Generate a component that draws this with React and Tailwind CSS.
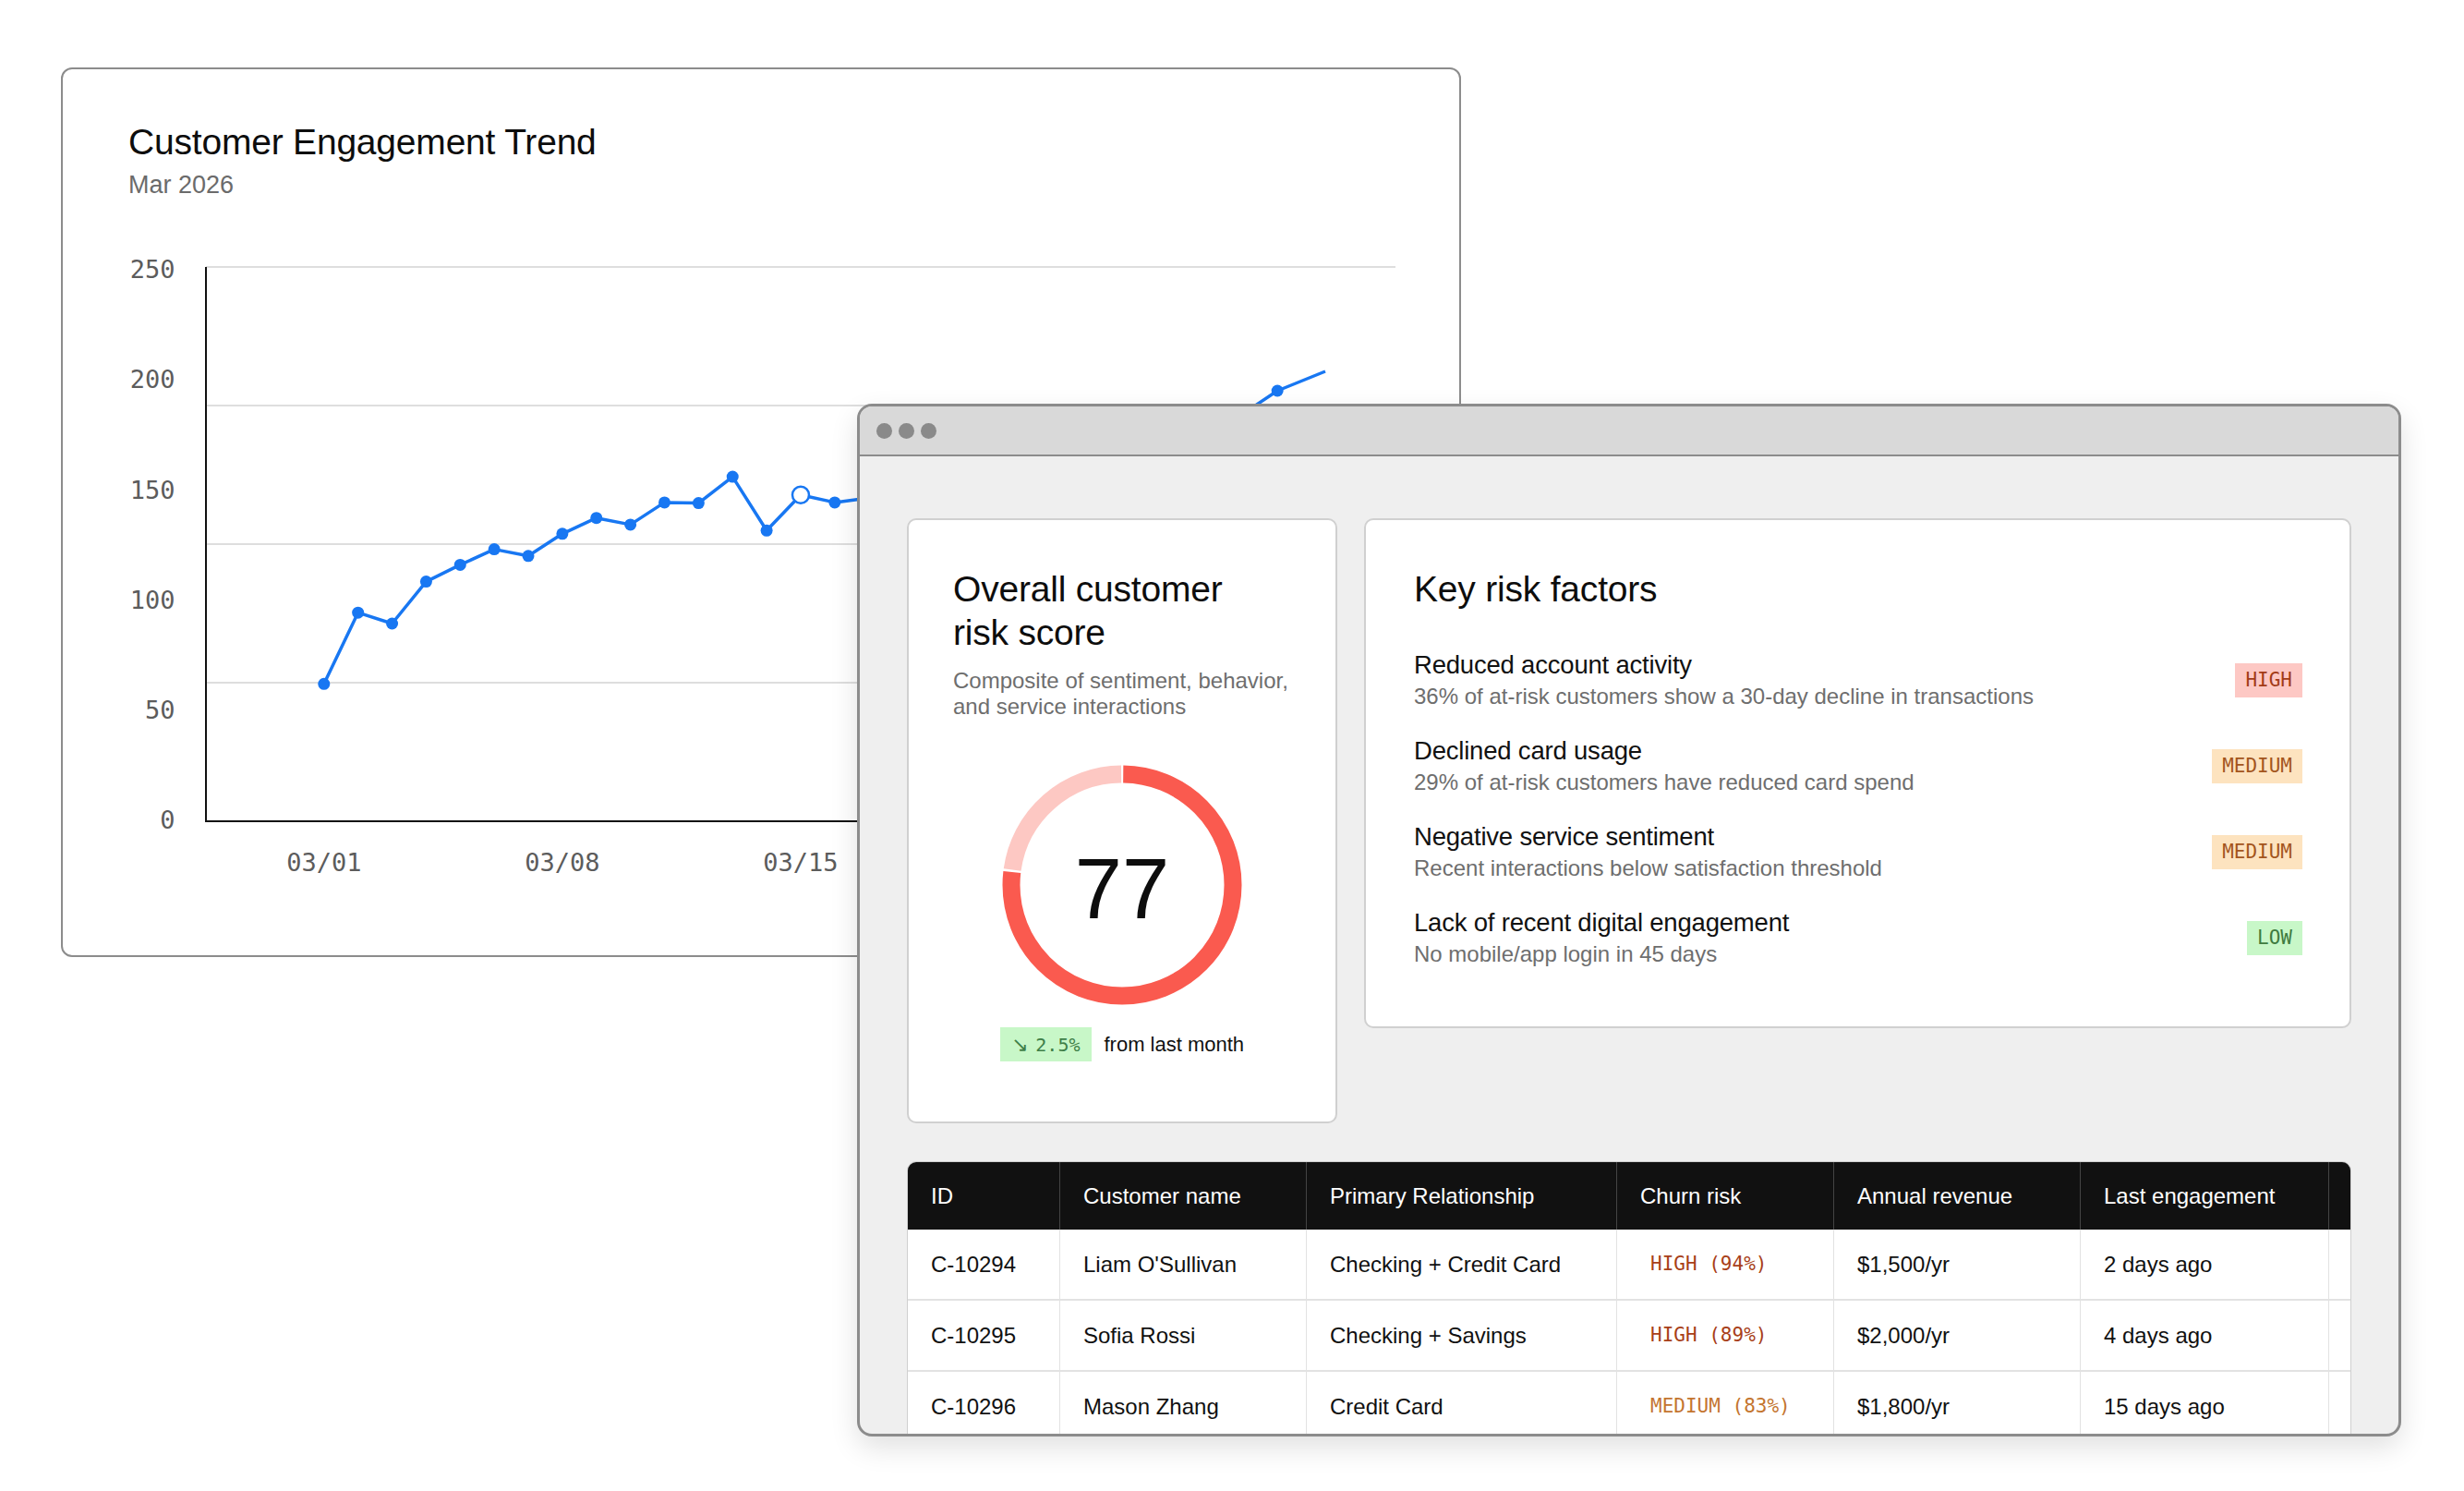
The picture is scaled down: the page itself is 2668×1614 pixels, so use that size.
import React from 'react';

const SANS = "font-['Liberation_Sans',Arial,sans-serif]";
const MONO = "font-['DejaVu_Sans_Mono',monospace]";

// engagement values, already in chart pixels (full-size canvas coords)
const ys = [
  740.3, 663.2, 675.0, 629.6, 611.4, 594.6, 601.8, 577.8, 560.7, 567.9,
  543.9, 544.6, 516.1, 574.3, 535.7, 543.9, 539, 530, 521, 512,
  515, 502, 494, 487, 479, 471, 462, 447.6, 423,
];
const dayX = (d) => 350.8 + (d - 1) * 36.87;
const points = ys.map((y, i) => [dayX(i + 1), y]);

const yLabels = [
  ['250', 291], ['200', 410], ['150', 530], ['100', 649], ['50', 768], ['0', 887],
];
const xLabels = ['03/01', '03/08', '03/15', '03/22', '03/29'];
const gridYs = [289, 439, 589, 739];

function TrendChart() {
  const line = points.map((p) => p.join(',')).join(' ') + ' 1435,402';
  return (
    <svg width="1512" height="700" viewBox="68 260 1512 700" className="block">
      {gridYs.map((y) => (
        <line key={y} x1="223" x2="1511" y1={y} y2={y} stroke="#dedede" strokeWidth="2" />
      ))}
      <line x1="223" x2="223" y1="289" y2="889" stroke="#111" strokeWidth="2" />
      <line x1="222" x2="1511" y1="889" y2="889" stroke="#111" strokeWidth="2" />
      {yLabels.map(([t, y]) => (
        <text key={t} x="189.5" y={y} textAnchor="end" dominantBaseline="central"
          fontFamily="DejaVu Sans Mono, monospace" fontSize="27" fill="#5c5c5c">{t}</text>
      ))}
      {xLabels.map((t, i) => (
        <text key={t} x={dayX(1 + i * 7)} y="933" textAnchor="middle" dominantBaseline="central"
          fontFamily="DejaVu Sans Mono, monospace" fontSize="27" fill="#5c5c5c">{t}</text>
      ))}
      <polyline points={line} fill="none" stroke="#1877f2" strokeWidth="3.5" strokeLinejoin="round" />
      {points.map(([x, y], i) =>
        i === 14 ? (
          <circle key={i} cx={x} cy={y} r="9" fill="#fff" stroke="#1877f2" strokeWidth="2.5" />
        ) : (
          <circle key={i} cx={x} cy={y} r="6.5" fill="#1877f2" />
        )
      )}
    </svg>
  );
}

function Donut({ value }) {
  const r = 120;
  const c = 2 * Math.PI * r;
  const red = (value / 100) * c;
  return (
    <div className="grid place-items-center w-[260px] h-[260px] mx-auto">
      <svg width="260" height="260" viewBox="0 0 260 260" className="[grid-area:1/1]">
        <g transform="rotate(-90 130 130)">
          <circle cx="130" cy="130" r={r} fill="none" stroke="#fa5a4f" strokeWidth="19"
            strokeDasharray={`${red - 2.5} ${c}`} strokeDashoffset="-1.25" />
          <circle cx="130" cy="130" r={r} fill="none" stroke="#fdc8c3" strokeWidth="19"
            strokeDasharray={`${c - red - 2.5} ${c}`} strokeDashoffset={-(red + 1.25)} />
        </g>
      </svg>
      <span className="[grid-area:1/1] mt-[8px] text-[92px] leading-none text-[#0d0d0d]">{value}</span>
    </div>
  );
}

const badgeStyles = {
  HIGH: 'bg-[#fdc8c4] text-[#a33b17]',
  MEDIUM: 'bg-[#fde3bf] text-[#a3551d]',
  LOW: 'bg-[#c8f7c8] text-[#3f7b3f]',
};

function Badge({ level }) {
  return (
    <span className={`${MONO} ${badgeStyles[level]} text-[21px] leading-[25px] px-[11px] py-[6px]`}>
      {level}
    </span>
  );
}

const factors = [
  ['Reduced account activity', '36% of at-risk customers show a 30-day decline in transactions', 'HIGH'],
  ['Declined card usage', '29% of at-risk customers have reduced card spend', 'MEDIUM'],
  ['Negative service sentiment', 'Recent interactions below satisfaction threshold', 'MEDIUM'],
  ['Lack of recent digital engagement', 'No mobile/app login in 45 days', 'LOW'],
];

const columns = ['ID', 'Customer name', 'Primary Relationship', 'Churn risk', 'Annual revenue', 'Last engagement', ''];

const rows = [
  ['C-10294', "Liam O'Sullivan", 'Checking + Credit Card', 'HIGH (94%)', '$1,500/yr', '2 days ago'],
  ['C-10295', 'Sofia Rossi', 'Checking + Savings', 'HIGH (89%)', '$2,000/yr', '4 days ago'],
  ['C-10296', 'Mason Zhang', 'Credit Card', 'MEDIUM (83%)', '$1,800/yr', '15 days ago'],
];

const gridCols = 'grid grid-cols-[165px_267px_336px_235px_267px_269px_23px]';

function CustomerTable() {
  return (
    <div className="mt-[41px] border border-[#d0d0d0] rounded-t-[10px] overflow-hidden bg-white">
      <div className={`${gridCols} bg-[#111] h-[73px]`}>
        {columns.map((col, i) => (
          <div key={i}
            className={`flex items-center px-[25px] text-[24px] text-white whitespace-nowrap ${i < 6 ? 'border-r border-[#444]' : ''}`}>
            {col}
          </div>
        ))}
      </div>
      {rows.map((row) => (
        <div key={row[0]} className={`${gridCols} h-[77px] border-b-2 border-[#e2e2e2]`}>
          {[...row, ''].map((cell, i) => (
            <div key={i}
              className={`flex items-center px-[25px] text-[24px] text-[#111] whitespace-nowrap ${i < 6 ? 'border-r border-[#e2e2e2]' : ''}`}>
              {i === 3 ? (
                <span className={`${MONO} text-[21px] px-[11px] ${cell.startsWith('HIGH') ? 'text-[#a83f19]' : 'text-[#c4752f]'}`}>
                  {cell}
                </span>
              ) : cell}
            </div>
          ))}
        </div>
      ))}
    </div>
  );
}

export default function App() {
  return (
    <div className={`${SANS} relative w-[2668px] h-[1614px] bg-white overflow-hidden text-[#111]`}>
      {/* chart window behind */}
      <div className="absolute left-[66px] top-[73px] w-[1516px] h-[963px] bg-white border-2 border-[#8c8c8c] rounded-[12px] overflow-hidden flex flex-col">
        <div className="pl-[71px] pt-[55px]">
          <h1 className="text-[39px] leading-[47px] tracking-[-0.2px] text-[#0d0d0d]">Customer Engagement Trend</h1>
          <p className="mt-[7px] text-[27px] leading-[32px] text-[#6b6b6b]">Mar 2026</p>
        </div>
        <div className="mt-[44px]">
          <TrendChart />
        </div>
      </div>

      {/* dashboard window in front */}
      <div className="absolute left-[928px] top-[437px] w-[1672px] h-[1118px] bg-[#efefef] border-[3px] border-[#8c8c8c] rounded-[16px] overflow-hidden shadow-[0_12px_30px_rgba(0,0,0,0.12)]">
        <div className="h-[54px] bg-[#d9d9d9] border-b-2 border-[#8c8c8c] flex items-center gap-[7px] pl-[18px]">
          <span className="w-[17px] h-[17px] rounded-full bg-[#8a8a8a]" />
          <span className="w-[17px] h-[17px] rounded-full bg-[#8a8a8a]" />
          <span className="w-[17px] h-[17px] rounded-full bg-[#8a8a8a]" />
        </div>

        <div className="px-[51px] pt-[67px]">
          <div className="flex items-start gap-[29px]">
            {/* risk score */}
            <div className="w-[466px] shrink-0 bg-white border-2 border-[#d0d0d0] rounded-[10px] pl-[48px] pr-[30px] pt-[51px] pb-[65px]">
              <h2 className="text-[39px] leading-[47px] tracking-[-0.2px] text-[#0d0d0d]">
                Overall customer<br />risk score
              </h2>
              <p className="mt-[15px] text-[24px] leading-[28px] text-[#6e6e6e]">
                Composite of sentiment, behavior,<br />and service interactions
              </p>
              <div className="mt-[49px] -ml-[18px]">
                <Donut value={77} />
              </div>
              <div className="mt-[24px] -ml-[18px] flex items-center justify-center gap-[14px]">
                <span className="bg-[#c8f7c8] text-[#3f7f48] h-[37px] px-[12px] flex items-center gap-[8px]">
                  <span className="font-['DejaVu_Sans',sans-serif] text-[22px] leading-none">↘</span>
                  <span className={`${MONO} text-[20px] leading-none`}>2.5%</span>
                </span>
                <span className="text-[22px] text-[#111]">from last month</span>
              </div>
            </div>

            {/* key risk factors */}
            <div className="flex-1 bg-white border-2 border-[#d0d0d0] rounded-[10px] pl-[52px] pr-[51px] pt-[51px] pb-[64px]">
              <h2 className="text-[39px] leading-[47px] tracking-[-0.2px] text-[#0d0d0d]">Key risk factors</h2>
              <div className="mt-[43px] flex flex-col gap-[29px]">
                {factors.map(([title, desc, level]) => (
                  <div key={title} className="flex items-center justify-between">
                    <div>
                      <div className="text-[27.5px] leading-[32px] tracking-[-0.2px] text-[#111]">{title}</div>
                      <div className="mt-[4px] text-[24px] leading-[28px] text-[#6e6e6e]">{desc}</div>
                    </div>
                    <Badge level={level} />
                  </div>
                ))}
              </div>
            </div>
          </div>

          <CustomerTable />
        </div>
      </div>
    </div>
  );
}
